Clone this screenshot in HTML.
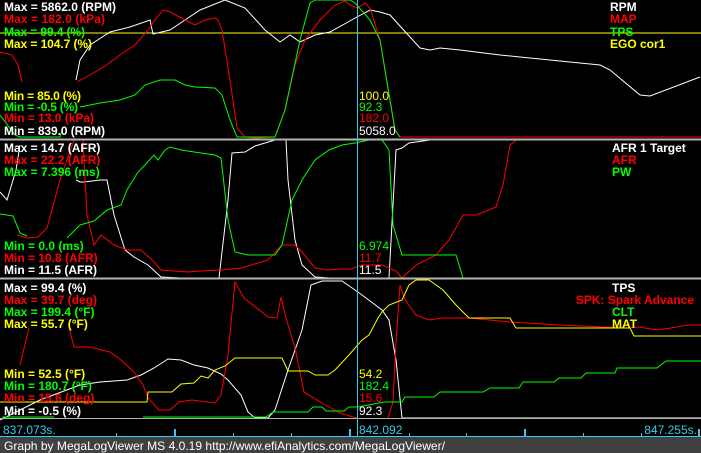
<!DOCTYPE html>
<html><head><meta charset="utf-8"><style>
html,body{margin:0;padding:0;background:#000;width:701px;height:453px;overflow:hidden}
svg{display:block}
text{font-family:"Liberation Sans",sans-serif;font-size:12px}
.b{font-weight:bold}
</style></head><body>
<svg width="701" height="453" viewBox="0 0 701 453" xmlns="http://www.w3.org/2000/svg">
<rect width="701" height="453" fill="#000"/>
<g fill="none" stroke-width="1">
<!-- Panel 1 -->
<line x1="0" y1="33" x2="701" y2="33" stroke="#ffff00"/>
<polyline stroke="#fff" points="76,80 80,60 90,45 110,32 130,27 150,20 153,34 170,30 185,20 200,10 225,0 245,8 265,30 280,42 290,35 300,42 315,35 330,32 357,17 370,10 380,12 390,15 420,48 430,50 440,48 460,50 500,55 520,57 570,62 600,65 610,70 640,95 650,96 700,77"/>
<polyline stroke="#ff0000" points="0,52 12,55 18,65 22,82"/>
<polyline stroke="#ff0000" points="77,82 95,72 105,66 120,55 135,45 148,30 155,20 163,10 170,12 185,20 195,25 205,20 215,18 218,20 222,30 230,80 237,128 245,137 255,138 275,137 285,110 295,65 305,40 320,20 335,5 345,1 350,5 357,8 365,3 370,8 380,40 390,100 395,130 400,137 701,137"/>
<polyline stroke="#00ff00" points="0,115 15,135 20,137 60,137 62,130"/>
<polyline stroke="#00ff00" points="80,107 100,103 120,100 135,95 145,85 160,80 175,80 185,85 195,87 215,88 222,95 230,120 237,137 275,137 285,110 300,40 310,3 315,0 350,0 355,3 370,20 380,40 390,100 395,130 400,137"/>
<!-- Panel 2 -->
<polyline stroke="#fff" points="0,192 7,200 16,170 20,145"/>
<polyline stroke="#fff" points="76,180 80,182 84,182 100,180 107,180 114,215 125,250 134,257 148,265 161,277 181,278 201,278 219,278 228,200 232,153 245,152 255,146 275,140 286,140 288,180 295,240 302,265 315,277 330,278 389,278 396,150 402,148 409,143 430,140 701,140"/>
<polyline stroke="#ff0000" points="17,235 27,238 38,237 47,228 60,180 74,140 83,140 87,215 94,245 101,235 114,245 127,250 141,250 154,262 161,270 174,271 188,272 201,271 221,270 241,268 268,260 282,245 295,245 302,252 315,268 329,270 342,269 351,269 362,265 382,265 396,271 402,278 416,265 436,255 449,240 463,215 476,215 496,207 503,185 510,145 516,140 701,140"/>
<polyline stroke="#00ff00" points="0,214 13,216 20,233 27,236"/>
<polyline stroke="#00ff00" points="67,238 80,225 94,221 107,210 121,205 127,190 138,172 145,165 154,155 158,160 165,150 170,147 181,150 201,153 215,155 221,158 228,220 235,252 248,255 275,255 282,245 292,200 302,180 315,160 329,150 342,145 355,143 369,140 382,140 389,150 393,225 402,255 456,255 463,278"/>
<!-- Panel 3 -->
<polyline stroke="#fff" points="0,420 40,400 80,385 100,382 127,380 141,375 154,368 168,359 181,360 194,365 208,368 221,374 228,380 241,395 248,412 255,418 268,418 275,410 288,370 302,330 311,285 322,281 342,281 355,290 362,295 382,310 389,320 396,360 402,418 701,418"/>
<polyline stroke="#ff0000" points="20,365 29,328"/>
<polyline stroke="#ff0000" points="69,328 74,347 89,347 110,352 121,360 134,372 143,385 148,398 159,410 170,410 179,402 192,400 215,403 221,395 228,355 235,282 244,298 268,317 277,318 281,297 286,318 295,348 304,392 322,403 340,413 353,417 358,418"/>
<polyline stroke="#ff0000" points="388,418 393,402 396,342 400,285 405,300 416,315 429,320 443,318 469,318 510,322 559,325 604,327 626,328 639,327 657,330 671,328 688,325 701,325"/>
<polyline stroke="#ffff00" points="0,402 147,402 148,392 172,392 181,384 194,383 201,376 208,378 215,370 225,366 235,358 282,358 288,371 308,371 315,375 328,375 335,370 349,355 362,340 369,335 378,318 382,312 389,305 402,300 409,285 416,280 429,280 443,290 456,305 469,318 510,318 516,328 630,328 634,336 701,336"/>
<polyline stroke="#00ff00" points="2,417 54,417"/>
<polyline stroke="#00ff00" points="143,417 266,417 273,412 308,412 313,407 322,407 326,411 344,411 349,407 358,407 384,402 402,402 405,397 434,397 440,392 483,392 490,388 519,388 523,382 554,382 559,378 581,378 586,373 615,373 617,368 657,368 666,361 701,361"/>
</g>
<!-- separators -->
<rect x="0" y="138.5" width="701" height="2" fill="#b4b4b4"/>
<rect x="0" y="277.5" width="701" height="2" fill="#b4b4b4"/>
<rect x="0" y="418" width="701" height="1" fill="#b4b4b4"/>
<!-- cursor -->
<line x1="357.5" y1="0" x2="357.5" y2="437" stroke="#33ccee"/>
<!-- axis -->
<line x1="0" y1="436.5" x2="701" y2="436.5" stroke="#33ccee"/>
<g stroke="#33ccee" stroke-width="2">
<line x1="175" y1="429" x2="175" y2="437"/><line x1="350" y1="429" x2="350" y2="437"/><line x1="525" y1="429" x2="525" y2="437"/><line x1="699" y1="429" x2="699" y2="437"/>
</g>
<g stroke="#33ccee" stroke-width="1">
<line x1="116.5" y1="433" x2="116.5" y2="437"/><line x1="233.5" y1="433" x2="233.5" y2="437"/><line x1="291.5" y1="433" x2="291.5" y2="437"/><line x1="409.5" y1="433" x2="409.5" y2="437"/><line x1="466.5" y1="433" x2="466.5" y2="437"/><line x1="583.5" y1="433" x2="583.5" y2="437"/><line x1="641.5" y1="433" x2="641.5" y2="437"/>
</g>
<g fill="#33ccee"><text x="3" y="434">837.073s.</text><text x="359" y="434">842.092</text><text x="697" y="434" text-anchor="end">847.255s.</text></g>
<rect x="0" y="437" width="701" height="16" fill="#404040"/>
<text x="4" y="450" fill="#fff" textLength="441" lengthAdjust="spacingAndGlyphs">Graph by MegaLogViewer MS 4.0.19 http://www.efiAnalytics.com/MegaLogViewer/</text>
<!-- Panel 1 labels -->
<g class="b">
<text x="4" y="11" fill="#fff" class="b" textLength="112">Max = 5862.0 (RPM)</text>
<text x="4" y="23" fill="#ff0000" class="b" textLength="101">Max = 182.0 (kPa)</text>
<text x="4" y="36" fill="#00ff00" class="b" textLength="81">Max = 99.4 (%)</text>
<text x="4" y="48" fill="#ffff00" class="b" textLength="88">Max = 104.7 (%)</text>
<text x="4" y="100" fill="#ffff00" class="b" textLength="77">Min = 85.0 (%)</text>
<text x="4" y="111" fill="#00ff00" class="b" textLength="74">Min = -0.5 (%)</text>
<text x="4" y="122" fill="#ff0000" class="b" textLength="90">Min = 13.0 (kPa)</text>
<text x="4" y="135" fill="#fff" class="b" textLength="101">Min = 839.0 (RPM)</text>
<text x="610" y="11" fill="#fff" class="b">RPM</text>
<text x="610" y="23" fill="#ff0000" class="b">MAP</text>
<text x="610" y="36" fill="#00ff00" class="b">TPS</text>
<text x="610" y="48" fill="#ffff00" class="b">EGO cor1</text>
<!-- Panel 2 -->
<text x="4" y="152" fill="#fff" class="b">Max = 14.7 (AFR)</text>
<text x="4" y="164" fill="#ff0000" class="b">Max = 22.2 (AFR)</text>
<text x="4" y="176" fill="#00ff00" class="b">Max = 7.396 (ms)</text>
<text x="4" y="250" fill="#00ff00" class="b">Min = 0.0 (ms)</text>
<text x="4" y="262" fill="#ff0000" class="b">Min = 10.8 (AFR)</text>
<text x="4" y="274" fill="#fff" class="b">Min = 11.5 (AFR)</text>
<text x="612" y="152" fill="#fff" class="b">AFR 1 Target</text>
<text x="612" y="164" fill="#ff0000" class="b">AFR</text>
<text x="612" y="176" fill="#00ff00" class="b">PW</text>
<!-- Panel 3 -->
<text x="4" y="292" fill="#fff" class="b">Max = 99.4 (%)</text>
<text x="4" y="304" fill="#ff0000" class="b">Max = 39.7 (deg)</text>
<text x="4" y="316" fill="#00ff00" class="b">Max = 199.4 (°F)</text>
<text x="4" y="328" fill="#ffff00" class="b">Max = 55.7 (°F)</text>
<text x="4" y="378" fill="#ffff00" class="b">Min = 52.5 (°F)</text>
<text x="4" y="390" fill="#00ff00" class="b">Min = 180.7 (°F)</text>
<text x="4" y="402" fill="#ff0000" class="b">Min = 15.6 (deg)</text>
<text x="4" y="415" fill="#fff" class="b">Min = -0.5 (%)</text>
<text x="612" y="292" fill="#fff" class="b">TPS</text>
<text x="694" y="304" fill="#ff0000" class="b" text-anchor="end">SPK: Spark Advance</text>
<text x="612" y="316" fill="#00ff00" class="b">CLT</text>
<text x="612" y="328" fill="#ffff00" class="b">MAT</text>
</g>
<!-- cursor values -->
<g>
<text x="359" y="100" fill="#ffff00">100.0</text>
<text x="359" y="111" fill="#00ff00">92.3</text>
<text x="359" y="122" fill="#ff0000">182.0</text>
<text x="359" y="135" fill="#fff">5058.0</text>
<text x="359" y="250" fill="#00ff00">6.974</text>
<text x="359" y="262" fill="#ff0000">11.7</text>
<text x="359" y="274" fill="#fff">11.5</text>
<text x="359" y="378" fill="#ffff00">54.2</text>
<text x="359" y="390" fill="#00ff00">182.4</text>
<text x="359" y="402" fill="#ff0000">15.6</text>
<text x="359" y="415" fill="#fff">92.3</text>
</g>
</svg>
</body></html>
